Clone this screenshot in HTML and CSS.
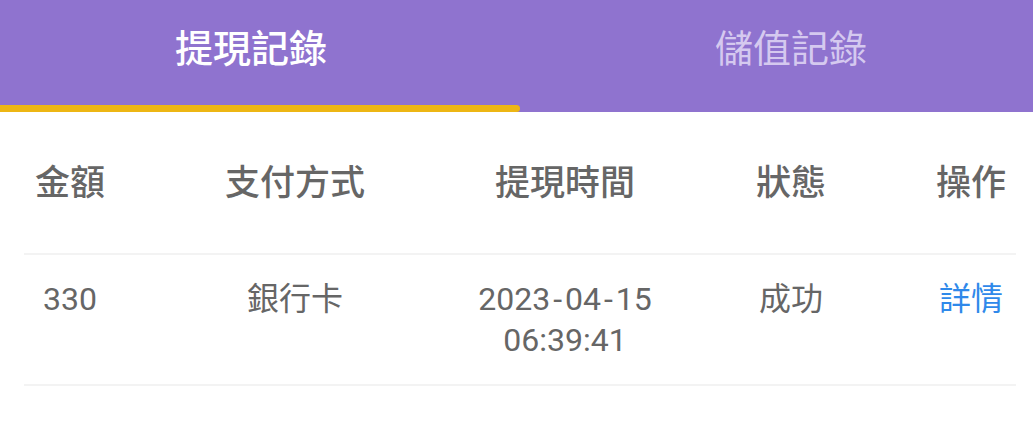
FILE: index.html
```html
<!DOCTYPE html>
<html lang="zh-Hant">
<head>
<meta charset="utf-8">
<link rel="stylesheet" href="styles.css">
</head>
<body>
<div class="tabs">
  <div class="tab tab-active">
    <div class="tab-label">提現記錄</div>
    <div class="tab-indicator"></div>
  </div>
  <div class="tab tab-idle">
    <div class="tab-label">儲值記錄</div>
  </div>
</div>
<div class="table">
  <div class="row head">
    <div class="cell">金額</div>
    <div class="cell">支付方式</div>
    <div class="cell">提現時間</div>
    <div class="cell">狀態</div>
    <div class="cell">操作</div>
  </div>
  <div class="row body">
    <div class="cell">330</div>
    <div class="cell">銀行卡</div>
    <div class="cell">2023<span class="dash">-</span>04<span class="dash">-</span>15<br>06:39:41</div>
    <div class="cell">成功</div>
    <div class="cell link">詳情</div>
  </div>
</div>
</body>
</html>
```

FILE: styles.css
```css
* { box-sizing: border-box; }
body {
  margin: 0;
  background: #ffffff;
  font-family: Roboto, "Noto Sans CJK TC", sans-serif;
}
.tabs {
  display: grid;
  grid-template-columns: 520px 1fr;
  background: #8f73cf;
  height: 112px;
}
.tab {
  display: flex;
  flex-direction: column;
}
.tab-label {
  height: 97px;
  display: flex;
  align-items: center;
  justify-content: center;
  font-size: 38px;
  line-height: 1;
}
.tab-active .tab-label {
  color: #ffffff;
  font-weight: 500;
  padding-right: 18px;
}
.tab-idle .tab-label {
  color: #d5c9ef;
  padding-left: 29px;
}
.tab-indicator {
  margin-top: 8px;
  height: 7px;
  background: #edb614;
  border-radius: 0 4px 4px 0;
}
.table {
  padding: 0 17px 0 24px;
}
.row {
  display: grid;
  grid-template-columns: 92px 358px 182px 270px 90px;
  border-bottom: 2px solid #f3f3f3;
  color: #666666;
}
.cell {
  text-align: center;
  white-space: nowrap;
}
.head {
  padding: 48px 0 45px;
  font-size: 35px;
  font-weight: 500;
  line-height: 48px;
}
.body {
  padding: 24px 0 23px;
  font-size: 32px;
  line-height: 41px;
}
.dash {
  padding: 0 3px;
}
.link {
  color: #2f89ea;
}
```
